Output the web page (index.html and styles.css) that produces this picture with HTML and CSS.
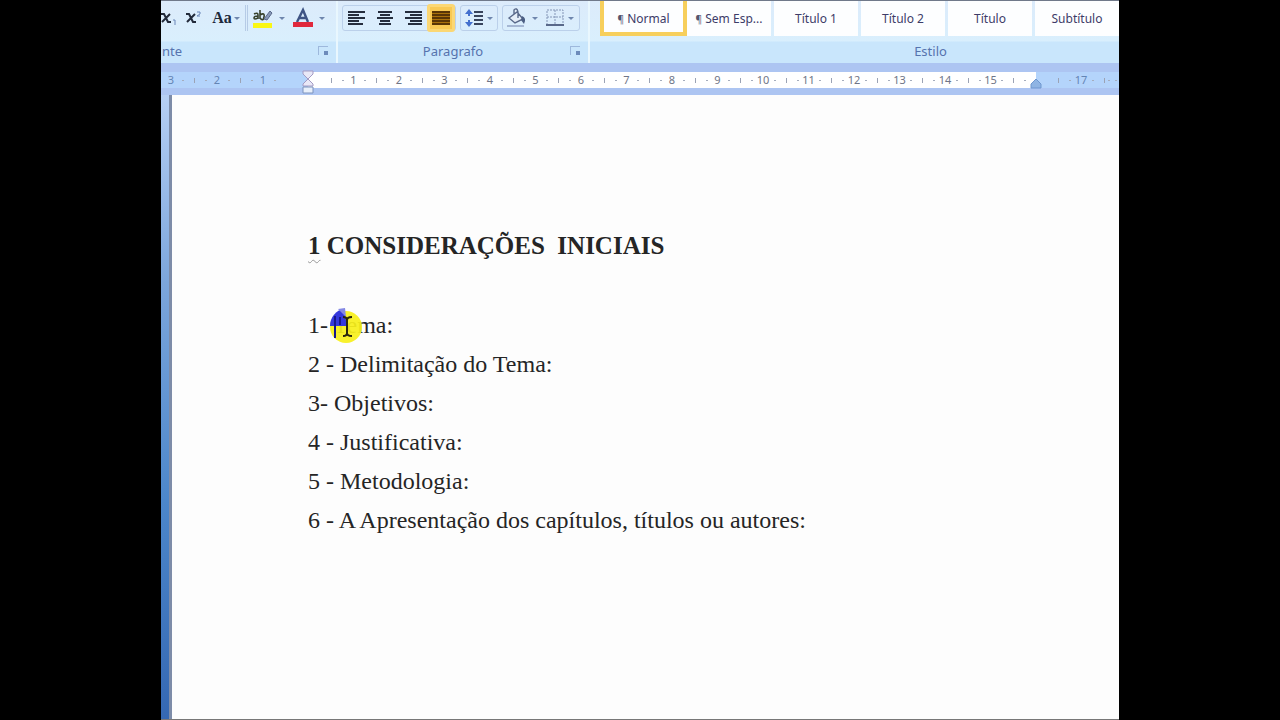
FILE: index.html
```html
<!DOCTYPE html>
<html lang="pt-BR">
<head>
<meta charset="utf-8">
<title>Documento</title>
<link rel="stylesheet" href="styles.css">
</head>
<body>
<div class="app">
  <div class="ribbon">
    <section class="group group-font">
      <div class="tools">
        <button class="tool tool-sub" aria-label="Subscrito"><svg width="18" height="20" viewBox="0 0 18 20"><path d="M0 6h3l4 8h3M9 6L1 14" fill="none" stroke="#222a3a" stroke-width="2"/><path d="M12 12h2v5" fill="none" stroke="#6b86b8"/></svg></button>
        <button class="tool" aria-label="Sobrescrito"><svg width="18" height="20" viewBox="0 0 18 20"><path d="M1 6h3l4 8h3M10 6l-8 8" fill="none" stroke="#222a3a" stroke-width="2"/><path d="M12 4h3v2l-3 2h3" fill="none" stroke="#6b86b8"/></svg></button>
        <button class="tool tool-case">Aa<i class="caret"></i></button>
        <span class="split"></span>
        <button class="tool tool-mark" aria-label="Realce"><svg width="22" height="22" viewBox="0 0 22 22"><path d="M1 16h19v5H1z" fill="#faf714"/><path d="M2 7q4-2 4 1v4M6 9q-4 0-4 2t4 0M8 3v9M8 8q5-3 4 2t-4 1" fill="none" stroke="#37412b" stroke-width="1.6"/><path d="M12 12l6-8 2 2-5 7z" fill="#8799b7" stroke="#59688a"/></svg><i class="caret"></i></button>
        <button class="tool tool-color" aria-label="Cor da fonte"><svg width="22" height="22" viewBox="0 0 22 22"><path d="M5 15L11 3l5 12M7 11h8" fill="none" stroke="#3f5484" stroke-width="2.4"/><path d="M1 15h20v5H1z" fill="#e0283c"/></svg><i class="caret"></i></button>
      </div>
      <h2 class="caption caption-left">nte</h2>
      <button class="launcher" aria-label="Opções de fonte"></button>
    </section>
    <section class="group group-para">
      <div class="tools">
        <div class="box aligns">
          <button class="tool" aria-label="Esquerda"><svg width="18" height="16" viewBox="0 0 18 16"><path d="M0 2h17M0 5h11M0 8h17M0 11h11M0 14h15" stroke="#252d3d" stroke-width="2"/></svg></button>
          <button class="tool" aria-label="Centralizar"><svg width="18" height="16" viewBox="0 0 18 16"><path d="M2 2h14M4 5h10M1 8h16M4 11h10M3 14h12" stroke="#252d3d" stroke-width="2"/></svg></button>
          <button class="tool" aria-label="Direita"><svg width="18" height="16" viewBox="0 0 18 16"><path d="M1 2h17M6 5h12M1 8h17M6 11h12M4 14h14" stroke="#252d3d" stroke-width="2"/></svg></button>
          <button class="tool active" aria-label="Justificar"><svg width="18" height="16" viewBox="0 0 18 16"><path d="M0 1h18v14H0z" fill="#a9700b"/><path d="M0 2h18M0 5h18M0 8h18M0 11h18M0 14h18" stroke="#593506" stroke-width="2"/></svg></button>
        </div>
        <div class="box box-line">
          <button class="tool" aria-label="Espaçamento"><svg width="19" height="20" viewBox="0 0 19 20"><path d="M4 1l4 5H5v2H3V6H0zM4 19l-4-5h3v-2h2v2h3z" fill="#4470ce"/><path d="M9 4h9M9 8h9M9 12h9M9 16h9" stroke="#39445c" stroke-width="2"/></svg><i class="caret"></i></button>
        </div>
        <div class="box box-fill">
          <button class="tool" aria-label="Sombreamento"><svg width="22" height="20" viewBox="0 0 22 20"><path d="M3 10l8-6 6 7-8 4zM8 7V2q3-3 4 2v6" fill="#e5eef8" stroke="#59698a" stroke-width="1.4"/><path d="M16 8q5 2 2 8l-3-4z" fill="#4c5f84"/><path d="M1 18h17" stroke="#a5b7d4" stroke-width="2"/></svg><i class="caret"></i></button>
          <button class="tool" aria-label="Bordas"><svg width="18" height="18" viewBox="0 0 18 18"><path d="M1 16V1h16v15M9 1v15M1 8h16" fill="none" stroke="#8496b7" stroke-dasharray="2 1"/><path d="M0 16h18" stroke="#59698a" stroke-width="2"/></svg><i class="caret"></i></button>
        </div>
      </div>
      <h2 class="caption caption-para">Paragrafo</h2>
      <button class="launcher" aria-label="Opções de parágrafo"></button>
    </section>
    <section class="group group-style">
      <div class="gallery">
        <button class="style selected"><span class="mark">¶</span> Normal</button>
        <button class="style"><span class="mark">¶</span> Sem Esp...</button>
        <button class="style">Título 1</button>
        <button class="style">Título 2</button>
        <button class="style">Título</button>
        <button class="style">Subtítulo</button>
      </div>
      <h2 class="caption caption-style">Estilo</h2>
    </section>
  </div>
  <div class="ruler">
    <div class="outside before"><span>3</span><span>2</span><span>1</span></div>
    <div class="inside">
      <svg class="indent" width="12" height="24" viewBox="0 0 12 24"><path d="M1 1h10v3l-5 5-5-5zM6 9l5 5v2H1v-2z" fill="#e9e8f7" stroke="#a49bc4"/><path d="M1 17h10v6H1z" fill="#e7effb" stroke="#7c93bd"/></svg>
      <span>1</span><span>2</span><span>3</span><span>4</span><span>5</span><span>6</span><span>7</span><span>8</span><span>9</span><span>10</span><span>11</span><span>12</span><span>13</span><span>14</span><span>15</span>
      <i class="tick"></i>
      <svg class="indent-right" width="12" height="10" viewBox="0 0 12 10"><path d="M6 0l5 5v4H1V5z" fill="#8fb4e3" stroke="#6f97cf"/></svg>
    </div>
    <div class="outside after"><span>17</span><i class="tick"></i></div>
  </div>
  <div class="workspace">
    <main class="page">
      <h1 class="title"><span class="grammar">1</span> CONSIDERAÇÕES&nbsp; INICIAIS</h1>
      <p class="line">1- <span class="pointed">Tema:<svg class="pointer" width="36" height="38" viewBox="0 0 36 38"><circle cx="17" cy="20" r="16" fill="#f7f01c" fill-opacity=".93"/><path d="M1 19A16 17 0 0 1 15 2l3 17z" fill="#3438dc"/><path d="M9 2l7-1 1 9z" fill="#8488e4"/><path d="M6 9v22M11 10v8" stroke="#17178c" stroke-width="2"/><path d="M14 10q4 0 4 3 0-3 5-3M18 12v16M14 29q4 0 4-3 0 3 5 3" fill="none" stroke="#29260d" stroke-width="2"/></svg></span></p>
      <p class="line">2 - Delimitação do Tema:</p>
      <p class="line">3- Objetivos:</p>
      <p class="line">4 - Justificativa:</p>
      <p class="line">5 - Metodologia:</p>
      <p class="line">6 - A Apresentação dos capítulos, títulos ou autores:</p>
    </main>
  </div>
</div>
</body>
</html>
```
FILE: styles.css
```css
* { box-sizing: border-box; }
body {
  margin: 0;
  padding: 0 12.5%;
  background: #000;
  font-family: "Noto Sans", sans-serif;
}
.app {
  min-height: 100vh;
  margin: 0 1px;
  display: flex;
  flex-direction: column;
  border-top: 1px solid #70798a;
  border-bottom: 1px solid #777;
  background: #adc5f2;
}
button {
  margin: 0;
  padding: 0;
  border: 0;
  background: none;
  font-family: inherit;
  color: inherit;
}
.ribbon {
  display: flex;
  height: 62px;
  background: linear-gradient(#dcebfb 0, #d9effd 40px, #c9e6fc 41px, #c9e6fc 100%);
  overflow: hidden;
}
.group {
  position: relative;
  display: flex;
  flex-direction: column;
  border-right: 2px solid #e9f7fe;
}
.group-font { flex: 0 0 177px; }
.group-para { flex: 0 0 252px; }
.group-style { flex: 1; min-width: 0; padding-left: 10px; border-right: 0; }
.tools {
  display: flex;
  align-items: center;
  height: 39px;
  padding-bottom: 5px;
}
.tool {
  display: flex;
  align-items: center;
  justify-content: center;
  height: 24px;
}
.group-font .tool { min-width: 29px; }
.group-font .tool-sub { min-width: 18px; }
.tool-case {
  gap: 2px;
  width: 36px;
  font: bold 16px "Liberation Serif", serif;
  color: #20293b;
}
.split {
  width: 3px;
  height: 26px;
  margin: 0 0 0 1px;
  border: 1px solid #b6cbe6;
  border-width: 0 1px;
}
.group-font .tool-mark, .group-font .tool-color { gap: 5px; width: 40px; }
.caret {
  border: 3px solid transparent;
  border-top-color: #6f86ad;
  border-bottom: 0;
}
.caption {
  margin: 0;
  font-size: 13px;
  line-height: 22px;
  font-weight: 400;
  text-align: center;
  color: #5673ae;
}
.caption-left { padding-left: 1px; text-align: left; }
.caption-para { padding-right: 20px; }
.caption-style { width: 100%; padding-left: 142px; }
.launcher {
  position: absolute;
  right: 8px;
  bottom: 8px;
  width: 10px;
  height: 9px;
  border: 1px solid #9db8dc;
  border-width: 1px 0 0 1px;
  background: linear-gradient(#6d8bbb, #6d8bbb) right bottom / 4px 4px no-repeat;
}
.group-para .tools { gap: 4px; padding-left: 4px; }
.box {
  display: flex;
  align-items: center;
  height: 26px;
  border: 1px solid #bbd0ea;
  border-radius: 3px;
}
.aligns .tool { width: 28px; }
.tool.active {
  height: 28px;
  border: 3px solid #fbd774;
  border-radius: 3px;
  background: #f8c954;
}
.box-line .tool { gap: 3px; width: 36px; }
.box-fill .tool { gap: 4px; width: 38px; }
.gallery {
  display: grid;
  grid-template-columns: repeat(6, 87px);
  height: 39px;
  padding-bottom: 4px;
}
.style {
  margin-right: 3px;
  background: #fdfeff;
  font-size: 12px;
  color: #3d3c68;
  white-space: nowrap;
}
.style.selected {
  margin-right: 0;
  padding-top: 4px;
  border: 4px solid #f7cf5c;
  border-top: 0;
}
.mark { font-size: 10px; color: #55556f; }
.ruler {
  display: flex;
  height: 32px;
  padding: 9px 0 7px;
}
.outside, .inside {
  display: grid;
  min-width: 0;
  font-size: 11px;
  line-height: 16px;
  text-align: center;
  color: #6f7587;
}
.outside { background: #b4d4fb; color: #6485b4; overflow: hidden; }
.before {
  flex: 0 0 147px;
  grid-template-columns: repeat(3, 46px);
  padding-right: 22px;
  justify-content: end;
}
.inside {
  position: relative;
  flex: 728;
  grid-template-columns: 1fr repeat(15, 2fr) 1fr;
  background: #fff;
}
.inside span:nth-of-type(1) { grid-column-start: 2; }
.after {
  flex: 61;
  grid-template-columns: 46px 16px;
  padding-left: 22px;
}
/* Half-centimetre tick on the cell edge, quarter dots on either side. */
.ruler span, .tick {
  min-width: 0;
  background:
    linear-gradient(#9ba3b5, #9ba3b5) 0 6px / 1px 5px no-repeat,
    linear-gradient(#a5adbd, #a5adbd) 11px 8px / 2px 1px no-repeat,
    linear-gradient(#a5adbd, #a5adbd) calc(100% - 10px) 8px / 2px 1px no-repeat;
}
.indent { position: absolute; left: -6px; top: -2px; z-index: 1; }
.indent-right { position: absolute; right: -6px; bottom: -1px; z-index: 1; }
.workspace {
  display: flex;
  flex: 1;
  padding-left: 8px;
  background: linear-gradient(#b6cff4, #7ca6dc 30%, #4c87cb 65%, #3568b3);
}
.page {
  flex: 1;
  padding: 131px 24px 40px 136px;
  border-left: 3px solid #7d8ca8;
  background: #fdfdfd;
  font-family: "Liberation Serif", "Times New Roman", serif;
  color: #252525;
}
.title {
  margin: 0 0 40px;
  font-size: 25px;
  line-height: 40px;
}
.grammar { text-decoration: underline wavy #999 1px; text-underline-offset: 5px; }
.line {
  margin: 0;
  font-size: 24px;
  line-height: 39px;
}
.pointed { position: relative; }
.pointer { position: absolute; left: -5px; top: -5px; }
```
